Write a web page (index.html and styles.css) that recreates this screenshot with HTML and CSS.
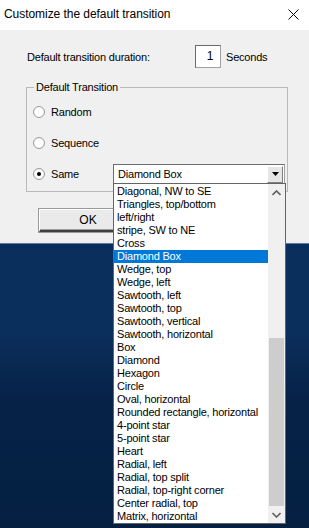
FILE: index.html
```html
<!DOCTYPE html>
<html>
<head>
<meta charset="utf-8">
<link rel="stylesheet" href="styles.css">
</head>
<body>
<div class="dialog">
  <div class="titlebar">
    <span class="title">Customize the default transition</span>
    <svg class="close" width="11" height="11" viewBox="0 0 11 11"><path d="M0.5 0.5 L10.5 10.5 M10.5 0.5 L0.5 10.5" stroke="#000" stroke-width="1" fill="none"/></svg>
  </div>
  <div class="content">
    <div class="duration-row">
      <span class="duration-label">Default transition duration:</span>
      <span class="spin">1</span>
      <span class="seconds">Seconds</span>
    </div>
    <div class="group">
      <span class="legend">Default Transition</span>
      <div class="radio-row">
        <span class="radio"></span><span class="radio-label">Random</span>
      </div>
      <div class="radio-row">
        <span class="radio"></span><span class="radio-label">Sequence</span>
      </div>
      <div class="radio-row">
        <span class="radio checked"></span><span class="radio-label">Same</span>
        <div class="combo">
          <span class="combo-text">Diamond Box</span>
          <span class="combo-btn"><svg width="7" height="4" viewBox="0 0 7 4"><path d="M0 0 H7 L3.5 4 Z" fill="#000"/></svg></span>
        </div>
      </div>
    </div>
    <div class="buttons">
      <button class="ok">OK</button>
    </div>
  </div>
</div>

<div class="droplist">
  <ul class="items">
    <li>Diagonal, NW to SE</li>
    <li>Triangles, top/bottom</li>
    <li>left/right</li>
    <li>stripe, SW to NE</li>
    <li>Cross</li>
    <li class="selected">Diamond Box</li>
    <li>Wedge, top</li>
    <li>Wedge, left</li>
    <li>Sawtooth, left</li>
    <li>Sawtooth, top</li>
    <li>Sawtooth, vertical</li>
    <li>Sawtooth, horizontal</li>
    <li>Box</li>
    <li>Diamond</li>
    <li>Hexagon</li>
    <li>Circle</li>
    <li>Oval, horizontal</li>
    <li>Rounded rectangle, horizontal</li>
    <li>4-point star</li>
    <li>5-point star</li>
    <li>Heart</li>
    <li>Radial, left</li>
    <li>Radial, top split</li>
    <li>Radial, top-right corner</li>
    <li>Center radial, top</li>
    <li>Matrix, horizontal</li>
  </ul>
  <div class="scrollbar">
    <span class="arrow"><svg width="9" height="6" viewBox="0 0 9 6"><path d="M0.5 5 L4.5 1 L8.5 5" stroke="#606060" stroke-width="1.6" fill="none"/></svg></span>
    <span class="track"></span>
    <span class="thumb"></span>
    <span class="arrow"><svg width="9" height="6" viewBox="0 0 9 6"><path d="M0.5 1 L4.5 5 L8.5 1" stroke="#606060" stroke-width="1.6" fill="none"/></svg></span>
  </div>
</div>
</body>
</html>
```
FILE: styles.css
```css
* { box-sizing: border-box; }
html, body { margin: 0; padding: 0; }
body {
  width: 309px;
  height: 528px;
  overflow: hidden;
  position: relative;
  font-family: "Liberation Sans", Arial, sans-serif;
  font-size: 11px;
  letter-spacing: -0.2px;
  color: #000;
  background: linear-gradient(180deg, #0b2f5c 0px, #0b2f5c 330px, #062247 400px, #052041 528px);
}
.dialog {
  height: 244px;
  background: #f0f0f0;
  border-bottom: 1px solid #5a7ca3;
}
.titlebar {
  height: 30px;
  background: #fff;
  display: flex;
  align-items: center;
  justify-content: space-between;
  padding: 0 10px 2px 4px;
}
.title {
  font-size: 12px;
  font-family: "Liberation Sans", Arial, sans-serif;
  letter-spacing: -0.05px;
}
.close { display: block; margin-top: 1px; }
.content {
  padding: 15px 0 0 26px;
}
.duration-row {
  display: flex;
  align-items: center;
  height: 23px;
  padding-left: 1px;
}
.duration-label { width: 168px; }
.spin {
  width: 26px;
  height: 23px;
  background: #fff;
  border: 1px solid #a0a0a0;
  border-top-color: #696969;
  border-left-color: #696969;
  text-align: center;
  font-size: 12px;
  line-height: 21px;
  padding-left: 4px;
}
.seconds { margin-left: 5px; }
.group {
  position: relative;
  margin-top: 19px;
  width: 262px;
  border: 1px solid #b9b9b9;
  padding: 8px 0 2px 6px;
}
.legend {
  position: absolute;
  top: -8px;
  left: 7px;
  padding: 0 2px;
  background: #f0f0f0;
  line-height: 14px;
}
.radio-row {
  display: flex;
  align-items: center;
  height: 31px;
}
.radio {
  width: 12px;
  height: 12px;
  border-radius: 50%;
  border: 1px solid #9a9a9a;
  background: radial-gradient(circle, #fff 55%, #e8e8e8 100%);
  display: flex;
  align-items: center;
  justify-content: center;
}
.radio.checked::after {
  content: "";
  width: 4px;
  height: 4px;
  border-radius: 50%;
  background: #000;
}
.radio-label {
  margin-left: 6px;
  width: 62px;
}
.combo {
  width: 172px;
  height: 21px;
  margin-top: 1px;
  background: #fff;
  border: 1px solid #a0a0a0;
  border-top-color: #6d6d6d;
  border-left-color: #6d6d6d;
  display: flex;
  align-items: center;
  justify-content: space-between;
  padding-left: 4px;
}
.combo-text { font-size: 11px; }
.combo-btn {
  width: 16px;
  height: 17px;
  margin-right: 1px;
  background: #e6e6e6;
  border: 1px solid #fff;
  border-right-color: #808080;
  border-bottom-color: #808080;
  display: flex;
  align-items: center;
  justify-content: center;
}
.combo-btn svg { display: block; }
.buttons {
  margin-top: 17px;
  padding-left: 13px;
}
.ok {
  width: 98px;
  height: 23px;
  font-family: "Liberation Sans", Arial, sans-serif;
  font-size: 12px;
  background: #eaeaea;
  border: 1px solid #fff;
  border-right-color: #404040;
  border-bottom: 2px solid #404040;
  box-shadow: inset -1px -1px 0 #a0a0a0;
  outline: 1px solid #9a9a9a;
  outline-offset: 0;
  padding: 0;
  color: #000;
}
.droplist {
  position: absolute;
  left: 113px;
  top: 183px;
  width: 173px;
  height: 341px;
  background: #fff;
  border: 1px solid #646464;
  display: flex;
}
.items {
  list-style: none;
  margin: 0;
  padding: 1px 0 0 0;
  flex: 1;
}
.items li {
  height: 13px;
  line-height: 13px;
  padding-left: 3px;
  white-space: nowrap;
  font-size: 11px;
}
.items li.selected {
  background: #0078d7;
  color: #fff;
}
.scrollbar {
  width: 17px;
  background: #f0f0f0;
  display: flex;
  flex-direction: column;
}
.arrow {
  height: 17px;
  display: flex;
  align-items: center;
  justify-content: center;
}
.arrow svg { display: block; }
.track { height: 137px; }
.thumb {
  height: 168px;
  margin: 0 1px;
  background: #cdcdcd;
}
```
